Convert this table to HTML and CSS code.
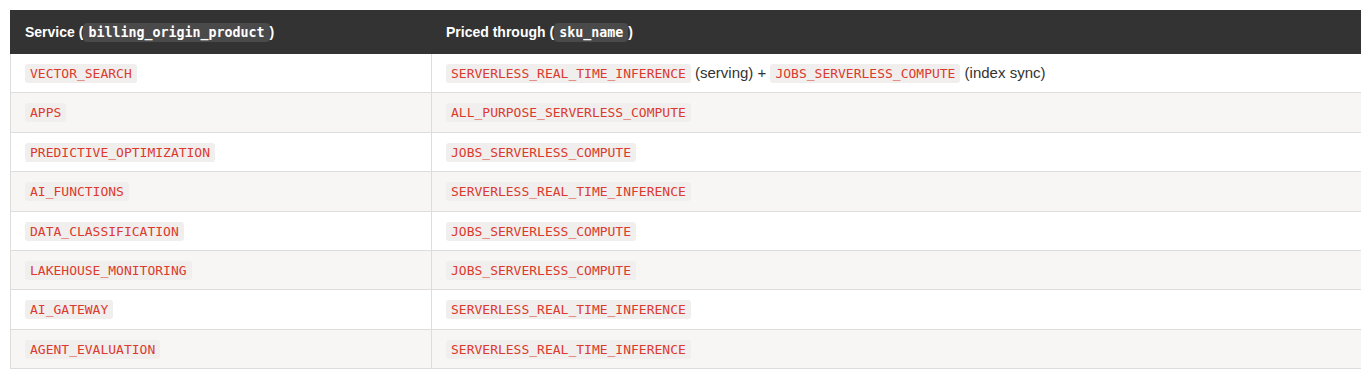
FILE: index.html
```html
<!DOCTYPE html>
<html>
<head>
<meta charset="utf-8">
<link rel="stylesheet" href="styles.css">
</head>
<body>
<table class="pricing">
  <thead>
    <tr>
      <th class="col-service">Service (<code>billing_origin_product</code>)</th>
      <th>Priced through (<code>sku_name</code>)</th>
    </tr>
  </thead>
  <tbody>
    <tr><td><code>VECTOR_SEARCH</code></td><td><code>SERVERLESS_REAL_TIME_INFERENCE</code> (serving) + <code>JOBS_SERVERLESS_COMPUTE</code> (index sync)</td></tr>
    <tr><td><code>APPS</code></td><td><code>ALL_PURPOSE_SERVERLESS_COMPUTE</code></td></tr>
    <tr><td><code>PREDICTIVE_OPTIMIZATION</code></td><td><code>JOBS_SERVERLESS_COMPUTE</code></td></tr>
    <tr><td><code>AI_FUNCTIONS</code></td><td><code>SERVERLESS_REAL_TIME_INFERENCE</code></td></tr>
    <tr><td><code>DATA_CLASSIFICATION</code></td><td><code>JOBS_SERVERLESS_COMPUTE</code></td></tr>
    <tr><td><code>LAKEHOUSE_MONITORING</code></td><td><code>JOBS_SERVERLESS_COMPUTE</code></td></tr>
    <tr><td><code>AI_GATEWAY</code></td><td><code>SERVERLESS_REAL_TIME_INFERENCE</code></td></tr>
    <tr><td><code>AGENT_EVALUATION</code></td><td><code>SERVERLESS_REAL_TIME_INFERENCE</code></td></tr>
  </tbody>
</table>
</body>
</html>
```

FILE: styles.css
```css
body {
  margin: 10px;
  background: #ffffff;
  font-family: "Liberation Sans", Arial, sans-serif;
  color: #333333;
}

.pricing {
  width: 1352px;
  border-collapse: collapse;
  font-size: 15px;
}

.pricing th {
  background: #333333;
  color: #ffffff;
  font-weight: 700;
  font-size: 14px;
  text-align: left;
  padding: 11px 15px 10px 14px;
  line-height: 20px;
  border: 1px solid #333333;
}

.pricing th code {
  font-family: "DejaVu Sans Mono", "Liberation Mono", monospace;
  font-size: 13.3px;
  font-weight: 700;
  background: #4a4a4a;
  color: #ffffff;
  padding: 2px 5px;
  border-radius: 4px;
}

.pricing .col-service {
  width: 391px;
}

.pricing td {
  padding: 10px 15px 10px 14px;
  line-height: 17.4px;
  border: 1px solid #dfdddb;
  vertical-align: middle;
}

.pricing tbody tr:nth-child(even) td {
  background: #f7f6f4;
}

.pricing td code {
  font-family: "DejaVu Sans Mono", "Liberation Mono", monospace;
  font-size: 13px;
  color: #dc3a2e;
  background: #f0efed;
  padding: 2px 5px;
  border-radius: 3px;
}
```
